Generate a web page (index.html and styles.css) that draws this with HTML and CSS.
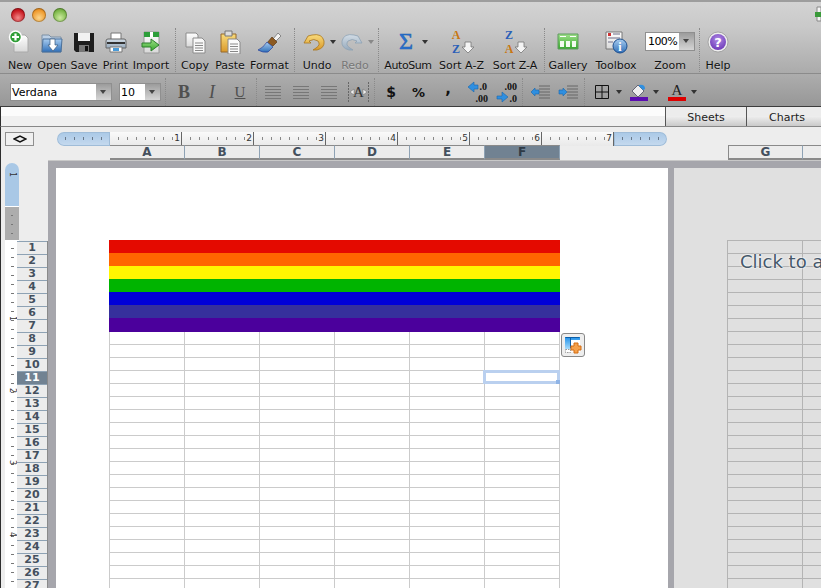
FILE: index.html
```html
<!DOCTYPE html>
<html lang="en">

<head>
    <meta charset="UTF-8">
    <title>Workbook</title>
    <link rel="stylesheet" href="styles.css">
</head>

<body>
    <svg class="defs" width="0" height="0">
        <defs>
            <linearGradient id="page" x1="0" y1="0" x2="0" y2="1"><stop offset="0" stop-color="#fff"/><stop offset="1" stop-color="#d8d8d8"/></linearGradient>
            <linearGradient id="blue" x1="0" y1="0" x2="0" y2="1"><stop offset="0" stop-color="#a9cdf0"/><stop offset="1" stop-color="#2f6fb8"/></linearGradient>
            <linearGradient id="green" x1="0" y1="0" x2="0" y2="1"><stop offset="0" stop-color="#9fe08a"/><stop offset="1" stop-color="#36a82c"/></linearGradient>
            <linearGradient id="amber" x1="0" y1="0" x2="0" y2="1"><stop offset="0" stop-color="#f9dc7c"/><stop offset="1" stop-color="#d9982a"/></linearGradient>
            <linearGradient id="steel" x1="0" y1="0" x2="0" y2="1"><stop offset="0" stop-color="#d3dde6"/><stop offset="1" stop-color="#96aabd"/></linearGradient>
            <linearGradient id="sky" x1="0" y1="0" x2="0" y2="1"><stop offset="0" stop-color="#1f8fe8"/><stop offset="1" stop-color="#a8dcfb"/></linearGradient>
            <radialGradient id="purple" cx="0.5" cy="0.35" r="0.7"><stop offset="0" stop-color="#b08be6"/><stop offset="1" stop-color="#6a35b5"/></radialGradient>
        </defs>
    </svg>

    <div class="window">
        <div class="titlebar">
            <span class="light red"></span>
            <span class="light amber"></span>
            <span class="light green"></span>
            <svg class="corner-icon" width="6" height="16" viewBox="0 0 6 16"><path d="M2 1h4v14H2z" fill="#f4f4f4" stroke="#888"/><path d="M0 6h6v5H0z" fill="#3a9a3a"/></svg>
        </div>

        <div class="toolbar">
            <div class="tool">
                <svg width="24" height="24" viewBox="0 0 24 24"><path d="M6 5h11l3 3v14H6z" fill="url(#page)" stroke="#aaa"/><circle cx="7.500" cy="7" r="6" fill="#2f9e36" stroke="#fff" stroke-width="1.500"/><path d="M7.500 3.500v7M4 7h7" stroke="#fff" stroke-width="2.200"/></svg>
                <span>New</span>
            </div>
            <div class="tool">
                <svg width="24" height="24" viewBox="0 0 24 24"><path d="M2 5h7l2 2h10v15H2z" fill="#bcd0e6" stroke="#7d90a5"/><path d="M3 9h19l-1 13H2z" fill="url(#blue)" stroke="#4d7199"/><path d="M10 9h5v6h3l-5 6-5-6h2z" fill="#fff" stroke="#39597c" stroke-width=".7"/></svg>
                <span>Open</span>
            </div>
            <div class="tool">
                <svg width="24" height="24" viewBox="0 0 24 24"><path d="M2 3h20v19H4l-2-2z" fill="#1d1d1d"/><path d="M6 3h12v8H6z" fill="#f2f2f2"/><path d="M7 15h10v7H7z" fill="#777"/><path d="M13 16h3v5h-3z" fill="#111"/></svg>
                <span>Save</span>
            </div>
            <div class="tool">
                <svg width="24" height="24" viewBox="0 0 24 24"><path d="M7 3h10v8H7z" fill="#fff" stroke="#777"/><path d="M2 11q0-2 2-2h16q2 0 2 2v7H2z" fill="url(#steel)" stroke="#666"/><path d="M3 13h18" stroke="#333" stroke-width="2"/><path d="M6 17h12v5H6z" fill="#fff" stroke="#777"/><path d="M9 18h6v3H9z" fill="#4a9bd8"/></svg>
                <span>Print</span>
            </div>
            <div class="tool">
                <svg width="24" height="24" viewBox="0 0 24 24"><path d="M5 2h15v21H5z" fill="url(#page)" stroke="#999"/><path d="M5 2h15v5H5z" fill="#2d9e3a"/><path d="M11 2h3v5h-3z" fill="#fff"/><path d="M3 13h9V9l8 6-8 6v-4H3z" fill="url(#green)" stroke="#2c7f2c"/></svg>
                <span>Import</span>
            </div>
            <div class="sep"></div>
            <div class="tool">
                <svg width="24" height="24" viewBox="0 0 24 24"><path d="M3 3h10l2 2v12H3z" fill="url(#page)" stroke="#8b8b8b"/><path d="M10 8h9l3 3v12H10z" fill="#f8f8f8" stroke="#8b8b8b"/><path d="M12 13h8M12 15.500h8M12 18h8M12 20.500h8" stroke="#888"/></svg>
                <span>Copy</span>
            </div>
            <div class="tool">
                <svg width="24" height="24" viewBox="0 0 24 24"><path d="M3 4h15v18H3z" fill="url(#amber)" stroke="#96682a"/><path d="M7 1h7v5H7z" fill="#ddd" stroke="#777"/><path d="M10 9h9l3 3v12H10z" fill="#fafafa" stroke="#888"/><path d="M12 14h8M12 16.500h8M12 19h8M12 21.500h8" stroke="#888"/></svg>
                <span>Paste</span>
            </div>
            <div class="tool">
                <svg width="24" height="24" viewBox="0 0 24 24"><path d="M15 9l5-6 3 3-5 5z" fill="#f3f3f3" stroke="#888"/><path d="M14 7l5 5-4 4-6-3z" fill="#8c5a22" stroke="#5c3a16" stroke-width=".7"/><path d="M9 12l6 5-5 5q-5 1-10-2 5-2 9-8z" fill="url(#blue)" stroke="#27409c" stroke-width=".7"/></svg>
                <span>Format</span>
            </div>
            <div class="sep"></div>
            <div class="tool with-caret">
                <svg width="22" height="24" viewBox="0 0 22 24"><path d="M5 6L1 13h7l-2-2q5-3 9 0 3 4-2 7l-3 2h4q8-2 7-9-2-8-12-6z" fill="url(#amber)" stroke="#a8761e" stroke-width=".8"/></svg>
                <b class="caret"></b>
                <span>Undo</span>
            </div>
            <div class="tool with-caret off">
                <svg width="22" height="24" viewBox="0 0 22 24"><path d="M17 6l4 7h-7l2-2q-5-3-9 0-3 4 2 7l3 2H8q-8-2-7-9 2-8 12-6z" fill="url(#steel)" stroke="#8ea2b4" stroke-width=".8"/></svg>
                <b class="caret"></b>
                <span>Redo</span>
            </div>
            <div class="sep"></div>
            <div class="tool with-caret sum">
                <svg width="26" height="28" viewBox="0 0 26 28"><text x="13" y="21" class="sigma">Σ</text></svg>
                <b class="caret"></b>
                <span>AutoSum</span>
            </div>
            <div class="tool">
                <svg width="26" height="28" viewBox="0 0 26 28"><text x="7" y="11" class="az a-mark">A</text><text x="7" y="25" class="az z-mark">Z</text><path d="M16 14h6v5h3l-6 6-6-6h3z" fill="#f4f4f4" stroke="#777" stroke-width=".8"/></svg>
                <span>Sort A-Z</span>
            </div>
            <div class="tool">
                <svg width="26" height="28" viewBox="0 0 26 28"><text x="7" y="11" class="az z-mark">Z</text><text x="7" y="25" class="az a-mark">A</text><path d="M16 14h6v5h3l-6 6-6-6h3z" fill="#f4f4f4" stroke="#777" stroke-width=".8"/></svg>
                <span>Sort Z-A</span>
            </div>
            <div class="sep"></div>
            <div class="tool">
                <svg width="22" height="20" viewBox="0 0 22 20"><path d="M1 2h20v15H1z" fill="url(#green)" stroke="#5e9a5e"/><path d="M3 9h4v6H3zM9 9h4v6H9zM15 9h4v6h-4z" fill="#f2fbef"/><path d="M3 4h6v1H3zM13 4h6v1h-6z" fill="#fff"/></svg>
                <span>Gallery</span>
            </div>
            <div class="tool">
                <svg width="24" height="24" viewBox="0 0 24 24"><path d="M2 2h16v17H2z" fill="url(#page)" stroke="#777"/><path d="M4 3h3v3H4z" fill="#c33"/><path d="M9 4h7M4 8h12M4 12h5" stroke="#99a" stroke-width="1.500"/><circle cx="16" cy="16" r="7" fill="url(#blue)" stroke="#1d4f8f"/><text x="16" y="20.500" class="info">i</text></svg>
                <span>Toolbox</span>
            </div>
            <div class="tool zoom">
                <div class="combo zoom-box"><span class="combo-value">100%</span><i class="combo-arrow"></i></div>
                <span>Zoom</span>
            </div>
            <div class="sep"></div>
            <div class="tool">
                <svg width="22" height="22" viewBox="0 0 22 22"><circle cx="11" cy="11" r="10" fill="#eee" stroke="#999" stroke-width=".8"/><circle cx="11" cy="11" r="8" fill="url(#purple)"/><text x="11" y="15.500" class="help-mark">?</text></svg>
                <span>Help</span>
            </div>
        </div>

        <div class="formatbar">
            <div class="combo font-box"><span class="combo-value">Verdana</span><i class="combo-arrow"></i></div>
            <div class="combo size-box"><span class="combo-value">10</span><i class="combo-arrow"></i></div>
            <div class="sep"></div>
            <div class="fmt serif-b">B</div>
            <div class="fmt serif-i">I</div>
            <div class="fmt serif-u">U</div>
            <div class="sep"></div>
            <div class="fmt"><i class="lines"></i></div>
            <div class="fmt"><i class="lines"></i></div>
            <div class="fmt"><i class="lines"></i></div>
            <div class="fmt">
                <svg width="21" height="20" viewBox="0 0 21 20"><path d="M.5 0v20M20.500 0v20" stroke="#666" stroke-dasharray="2 1"/><path d="M2 10l4-3v6zM19 10l-4-3v6z" fill="#eee" stroke="#666" stroke-width=".5"/><text x="10.500" y="15" class="wrap-a">A</text></svg>
            </div>
            <div class="sep"></div>
            <div class="fmt money">$</div>
            <div class="fmt percent">%</div>
            <div class="fmt comma">,</div>
            <div class="fmt">
                <svg width="22" height="22" viewBox="0 0 22 22"><path d="M1 6l6-5v3h4v4H7v3z" fill="#2f8fe0" stroke="#1766ad" stroke-width=".6"/><text x="20" y="9" class="dec">.0</text><text x="21" y="21" class="dec">.00</text></svg>
            </div>
            <div class="fmt">
                <svg width="22" height="22" viewBox="0 0 22 22"><text x="21" y="9" class="dec">.00</text><path d="M1 15h5v-4l6 5-6 5v-3H1z" fill="#2f8fe0" stroke="#1766ad" stroke-width=".6"/><text x="21" y="21" class="dec">.0</text></svg>
            </div>
            <div class="sep"></div>
            <div class="fmt">
                <svg width="20" height="14" viewBox="0 0 20 14"><path d="M9 1h11M9 4h11M9 7h11M9 10h11M9 13h11" stroke="#666"/><path d="M1 7l4-4v2h4v4H5v2z" fill="#2f8fe0" stroke="#1766ad" stroke-width=".6"/></svg>
            </div>
            <div class="fmt">
                <svg width="20" height="14" viewBox="0 0 20 14"><path d="M9 1h11M9 4h11M9 7h11M9 10h11M9 13h11" stroke="#666"/><path d="M1 5h4V3l4 4-4 4V9H1z" fill="#2f8fe0" stroke="#1766ad" stroke-width=".6"/></svg>
            </div>
            <div class="sep"></div>
            <div class="fmt picker borders">
                <svg width="14" height="14" viewBox="0 0 14 14"><path d="M.5.500h13v13H.5zM7 .5v13M.5 7h13" fill="none" stroke="#111"/></svg>
                <b class="caret"></b>
            </div>
            <div class="fmt picker">
                <span class="swatch-icon">
                    <svg width="18" height="13" viewBox="0 0 18 13"><path d="M2 7l6-6 6 6-6 6z" fill="#eee" stroke="#667"/><path d="M9 1q6-1 6 4l-2 1-4-4z" fill="#2f8fe0"/></svg>
                    <i class="swatch violet"></i>
                </span>
                <b class="caret"></b>
            </div>
            <div class="fmt picker">
                <span class="swatch-icon">
                    <span class="color-a">A</span>
                    <i class="swatch scarlet"></i>
                </span>
                <b class="caret"></b>
            </div>
        </div>

        <div class="tabstrip">
            <div class="tab">Sheets</div>
            <div class="tab">Charts</div>
        </div>

        <div class="rulerbar">
            <div class="ruler-row">
                <div class="view-toggle"><svg width="14" height="8" viewBox="0 0 14 8"><path d="M1 4l6-3 6 3-6 3z" fill="none" stroke="#111" stroke-width="1.500"/></svg></div>
                <div class="h-ruler">
                    <div class="h-margin"></div>
                    <div class="h-body">
                        <span>1</span><span>2</span><span>3</span><span>4</span><span>5</span><span>6</span><span>7</span>
                    </div>
                    <div class="h-margin end"></div>
                </div>
            </div>
            <div class="col-heads">
                <div class="col">A</div>
                <div class="col">B</div>
                <div class="col">C</div>
                <div class="col">D</div>
                <div class="col">E</div>
                <div class="col active">F</div>
                <div class="col far">G</div>
                <div class="col"></div>
            </div>
        </div>

        <div class="workspace">
            <div class="gutter">
                <div class="v-ruler">
                    <div class="v-margin"><span>1</span></div>
                    <div class="v-gray"></div>
                    <div class="v-body">
                        <em class="n1">1</em><em class="n2">2</em><em class="n3">3</em><em class="n4">4</em>
                    </div>
                </div>
                <div class="row-heads">
                    <div>1</div><div>2</div><div>3</div><div>4</div><div>5</div><div>6</div><div>7</div><div>8</div><div>9</div>
                    <div>10</div><div class="active">11</div><div>12</div><div>13</div><div>14</div><div>15</div><div>16</div><div>17</div><div>18</div>
                    <div>19</div><div>20</div><div>21</div><div>22</div><div>23</div><div>24</div><div>25</div><div>26</div><div>27</div>
                </div>
            </div>

            <div class="pages">
                <div class="page">
                    <div class="sheet">
                        <div class="band c-red"></div>
                        <div class="band c-orange"></div>
                        <div class="band c-yellow"></div>
                        <div class="band c-green"></div>
                        <div class="band c-blue"></div>
                        <div class="band c-indigo"></div>
                        <div class="band c-purple"></div>
                        <div class="cells"></div>
                        <div class="selection"><i></i></div>
                    </div>
                    <div class="add-button">
                        <svg width="22" height="22" viewBox="0 0 22 22"><path d="M3 3h15v15H3z" fill="#fff"/><path d="M3 3h15v3H3zM3 6h5v9H3z" fill="url(#sky)"/><path d="M3.500 3.500h14M8.500 3.500v11" stroke="#0b5ea8" fill="none"/><path d="M3.500 15.500h5v3h-5z" fill="none" stroke="#999" stroke-dasharray="1.500 1"/><path d="M12 9h4v3h3v4h-3v3h-4v-3H9v-4h3z" fill="#f5a04a" stroke="#d26c12"/></svg>
                    </div>
                </div>
                <div class="page-next">
                    <div class="ghost-grid"></div>
                    <div class="placeholder">Click to add</div>
                </div>
            </div>
        </div>
    </div>
</body>

</html>
```

FILE: styles.css
```css
body {
    margin: 0;
    font-family: "DejaVu Sans", sans-serif;
    background-color: #ededed;
}

.defs {
    position: absolute;
}

.window {
    width: 821px;
    height: 588px;
    overflow: hidden;
    display: flex;
    flex-direction: column;
}

.titlebar {
    height: 27px;
    box-sizing: border-box;
    padding: 6px 0 0 11px;
    display: flex;
    gap: 7px;
    background: linear-gradient(#d3d3d3, #c9c9c9);
    border-top: 2px solid #9d9d9d;
    position: relative;
}

.light {
    width: 14px;
    height: 14px;
    border-radius: 50%;
    box-shadow: inset 0 0 0 1px rgba(0, 0, 0, 0.25);
}

.light.red {
    background: radial-gradient(circle at 50% 70%, #f28a8a, #c91a22 60%, #8f1016);
}

.light.amber {
    background: radial-gradient(circle at 50% 70%, #fbd68d, #ef9a2e 60%, #b56a12);
}

.light.green {
    background: radial-gradient(circle at 50% 70%, #cdeaa0, #7db84a 60%, #52862a);
}

.corner-icon {
    position: absolute;
    right: 0;
    top: 4px;
}

.toolbar {
    height: 47px;
    box-sizing: border-box;
    padding-left: 4px;
    display: grid;
    grid-template-columns: 32px 32px 32px 31px 40px 8px 32px 38px 41px 8px 38px 38px 8px 52px 55px 52px 6px 42px 54px 54px 4px 34px;
    background: linear-gradient(#c9c9c9, #ababab);
    border-bottom: 1px solid #8b8b8b;
    font-size: 11px;
    color: #111;
}

.tool {
    display: grid;
    grid-template-rows: 29px 15px;
    justify-items: center;
    align-items: center;
    white-space: nowrap;
}

.tool > span {
    margin-top: 3px;
    text-shadow: 0 1px 0 rgba(255, 255, 255, 0.3);
}

.with-caret {
    grid-template-columns: 1fr auto;
    column-gap: 5px;
}

.with-caret > span {
    grid-column: 1 / 3;
}

.with-caret svg {
    justify-self: end;
}

.sum {
    column-gap: 3px;
}

.sum .caret {
    margin-right: 6px;
}

.sum > span {
    letter-spacing: -0.4px;
}

.caret {
    width: 0;
    height: 0;
    border: 3px solid transparent;
    border-top: 4px solid #333;
    border-bottom: 0;
}

.off {
    color: #777;
}

.off .caret {
    border-top-color: #888;
}

.sep {
    justify-self: center;
    width: 0;
    height: 44px;
    border-left: 1px dotted #8a8a8a;
    margin-top: 1px;
}

.sigma {
    font: 24px "Liberation Serif", serif;
    text-anchor: middle;
    fill: #2a72d0;
    stroke: #1c5cb0;
    stroke-width: 0.5px;
}

.az {
    font: bold 12px "Liberation Serif", serif;
    text-anchor: middle;
}

.a-mark {
    fill: #c87612;
}

.z-mark {
    fill: #2b5fb8;
}

.info {
    font: bold 12px "Liberation Serif", serif;
    text-anchor: middle;
    fill: #fff;
}

.help-mark {
    font: bold 13px "DejaVu Sans", sans-serif;
    text-anchor: middle;
    fill: #fff;
}

.combo {
    display: flex;
    height: 18px;
    box-sizing: border-box;
    background-color: #fff;
    border: 1px solid #8f8f8f;
    font-size: 11px;
    color: #000;
}

.combo-value {
    flex: 1;
    padding-left: 1px;
    line-height: 17px;
}

.combo-arrow {
    width: 15px;
    position: relative;
    background: linear-gradient(#9c9c9c, #d5d5d5);
}

.combo-arrow::after {
    content: "";
    position: absolute;
    left: 4px;
    top: 6px;
    border: 3px solid transparent;
    border-top: 4px solid #444;
    border-bottom: 0;
}

.zoom-box {
    width: 50px;
    height: 19px;
}

.zoom-box .combo-value {
    padding-left: 2px;
    letter-spacing: -0.6px;
    line-height: 18px;
}

.formatbar {
    height: 33px;
    box-sizing: border-box;
    padding: 3px 0 0 10px;
    display: grid;
    grid-template-columns: 102px 49px 9px 28px 28px 28px 4px 29px 28px 28px 30px 2px 32px 26px 30px 29px 29px 2px 34px 22px 10px 38px 38px 38px;
    align-items: center;
    background: linear-gradient(#adadad, #979797);
    border-bottom: 1px solid #3c3c3c;
}

.font-box {
    width: 102px;
}

.size-box {
    width: 42px;
    margin-left: 7px;
}

.formatbar .sep {
    height: 28px;
    margin-top: 0;
}

.fmt {
    display: flex;
    align-items: center;
    justify-content: center;
    height: 24px;
    color: #333;
}

.serif-b,
.serif-i,
.serif-u {
    font-family: "Liberation Serif", serif;
    font-size: 18px;
    color: #4f4f4f;
}

.serif-b {
    font-weight: bold;
}

.serif-i {
    font-style: italic;
}

.serif-u {
    text-decoration: underline;
    font-size: 15px;
}

.lines {
    width: 16px;
    height: 13px;
    background: repeating-linear-gradient(#777 0 1px, transparent 1px 3px);
}

.wrap-a {
    font: 15px "Liberation Serif", serif;
    text-anchor: middle;
    fill: #333;
}

.money {
    font: bold 14px "DejaVu Sans", sans-serif;
    color: #111;
}

.percent {
    font: bold 13px "DejaVu Sans", sans-serif;
    color: #111;
    padding-right: 3px;
}

.comma {
    font: bold 15px "DejaVu Sans", sans-serif;
    color: #111;
    padding-bottom: 6px;
}

.dec {
    font: bold 10px "Liberation Serif", serif;
    text-anchor: end;
    fill: #111;
}

.picker {
    justify-content: flex-start;
    gap: 5px;
    padding-left: 3px;
}

.picker.borders {
    gap: 7px;
    padding-left: 6px;
}

.swatch-icon {
    width: 18px;
    display: flex;
    flex-direction: column;
    align-items: center;
}

.swatch {
    width: 18px;
    height: 4px;
}

.swatch.violet {
    background-color: #5b0eb0;
}

.swatch.scarlet {
    background-color: #dd0000;
}

.color-a {
    font: 15px/14px "Liberation Serif", serif;
    color: #222;
}

.tabstrip {
    height: 20px;
    flex: none;
    box-sizing: border-box;
    padding-left: 664px;
    display: flex;
    background: linear-gradient(#fcfcfc 50%, #f0f0f0 50%);
    border-left: 1px solid #2d2d2d;
    border-bottom: 1px solid #888;
}

.tab {
    width: 81px;
    flex: none;
    box-sizing: border-box;
    border-left: 1px solid #555;
    background: linear-gradient(#ececec 50%, #ededed 50%, #cacaca);
    text-align: center;
    font-size: 11px;
    line-height: 21px;
    color: #222;
}

.rulerbar {
    height: 33px;
    flex: none;
    box-sizing: border-box;
    border-left: 1px solid #2d2d2d;
    background-color: #ededed;
}

.ruler-row {
    padding: 5px 0 0 4px;
    display: flex;
    height: 13px;
}

.view-toggle {
    width: 29px;
    height: 14px;
    box-sizing: border-box;
    border: 1px solid #8f8f8f;
    display: flex;
    align-items: center;
    justify-content: center;
    background-color: #f0f0f0;
}

.h-ruler {
    margin-left: 23px;
    display: flex;
    width: 610px;
    height: 14px;
}

.h-margin {
    width: 53px;
    border-radius: 7px 0 0 7px;
    background:
        repeating-linear-gradient(90deg, transparent 0 8px, #68788a 8px 9px) 0 5px / 100% 3px no-repeat,
        linear-gradient(#a9c8e6, #c6daef);
    box-shadow: inset 0 0 0 1px #9fbcd8;
}

.h-margin.end {
    border-radius: 0 7px 7px 0;
}

.h-body {
    flex: 1;
    display: flex;
    background:
        repeating-linear-gradient(90deg, transparent 0 8px, #888 8px 9px) 0 5px / 100% 3px no-repeat,
        linear-gradient(#fafafa, #e9e9e9);
    font-size: 9px;
    color: #333;
}

.h-body span {
    width: 72px;
    box-sizing: border-box;
    text-align: right;
    padding-right: 1px;
    line-height: 13px;
    border-right: 1px solid #666;
}

.col-heads {
    display: flex;
    padding-left: 109px;
    position: relative;
}

.col {
    flex: none;
    width: 75px;
    height: 15px;
    box-sizing: border-box;
    border-right: 1px solid #8ea2b4;
    border-top: 1px solid #8a8a8a;
    border-bottom: 2px solid #8a8a8a;
    background-color: #ececec;
    text-align: center;
    font-size: 12px;
    font-weight: bold;
    line-height: 13px;
    color: #44505e;
}

.col.active {
    background-color: #718292;
    color: #2e3a46;
}

.col.far {
    margin-left: 168px;
    border-left: 1px solid #8a8a8a;
}

.workspace {
    flex: 1;
    display: flex;
    min-height: 0;
}

.gutter {
    width: 48px;
    flex: none;
    position: relative;
    background-color: #ededed;
    border-left: 1px solid #2d2d2d;
    box-sizing: border-box;
}

.v-ruler {
    width: 14px;
    margin-left: 4px;
    padding-top: 3px;
    display: flex;
    flex-direction: column;
    height: 100%;
    box-sizing: border-box;
}

.v-margin {
    height: 43px;
    flex: none;
    box-sizing: border-box;
    padding-top: 7px;
    border-radius: 7px 7px 0 0;
    background-color: #a9c8e6;
    text-align: center;
    font-size: 8px;
    color: #333;
}

.v-margin span,
.v-body em {
    display: block;
    transform: rotate(90deg);
    font-style: normal;
}

.v-gray {
    height: 34px;
    flex: none;
    border-top: 1px solid #fff;
    box-sizing: border-box;
    background:
        repeating-linear-gradient(transparent 0 8px, #777 8px 9px) 6px 0 / 2px 100% no-repeat,
        #adadad;
}

.v-body {
    flex: 1;
    position: relative;
    background:
        repeating-linear-gradient(transparent 0 8px, #777 8px 9px) 6px 0 / 3px 100% no-repeat,
        #fff;
    font-size: 8px;
    color: #333;
    text-align: center;
}

.v-body em {
    position: absolute;
    left: 0;
    width: 14px;
}

.v-body .n1 { top: 74px; }
.v-body .n2 { top: 146px; }
.v-body .n3 { top: 218px; }
.v-body .n4 { top: 290px; }

.row-heads {
    position: absolute;
    left: 16px;
    top: 81px;
    width: 30px;
    border-right: 1px solid #8a8a8a;
}

.row-heads div {
    height: 13px;
    box-sizing: border-box;
    border-top: 1px solid #8ea2b4;
    background-color: #ececec;
    text-align: center;
    font-size: 11px;
    font-weight: bold;
    line-height: 12px;
    color: #44505e;
}

.row-heads .active {
    background-color: #718292;
    color: #fff;
}

.pages {
    flex: 1;
    display: flex;
    gap: 6px;
    padding: 8px 0 0 8px;
    background-color: #a6a6ac;
    box-shadow: inset 0 1px 0 #c8c8c8;
}

.page {
    width: 612px;
    flex: none;
    position: relative;
    background-color: #fff;
}

.sheet {
    position: relative;
    margin: 72px 0 0 53px;
    width: 451px;
}

.band {
    height: 13px;
}

.c-red { background-color: #e40a00; }
.c-orange { background-color: #ff6600; }
.c-yellow { background-color: #fff600; }
.c-green { background-color: #00b400; }
.c-blue { background-color: #0000d8; }
.c-indigo { background-color: #36309c; }
.c-purple { background-color: #4b009c; height: 14px; }

.cells {
    height: 260px;
    box-sizing: border-box;
    background:
        repeating-linear-gradient(transparent 0 12px, #cbcbcb 12px 13px),
        repeating-linear-gradient(90deg, #cbcbcb 0 1px, transparent 1px 75px);
    border-right: 1px solid #cbcbcb;
}

.selection {
    position: absolute;
    left: 374px;
    top: 130px;
    width: 77px;
    height: 14px;
    box-sizing: border-box;
    border: 3px solid #bad0ef;
    background-color: #fff;
}

.selection i {
    position: absolute;
    right: -3px;
    bottom: -3px;
    width: 4px;
    height: 4px;
    background-color: #8fb4e6;
}

.add-button {
    position: absolute;
    left: 505px;
    top: 165px;
    width: 24px;
    height: 24px;
    box-sizing: border-box;
    display: flex;
    align-items: center;
    justify-content: center;
    background-color: #eee;
    border: 1px solid #888;
    border-radius: 3px;
}

.page-next {
    flex: 1;
    position: relative;
    background-color: #e0e0e0;
}

.ghost-grid {
    position: absolute;
    left: 53px;
    top: 72px;
    right: 0;
    bottom: 0;
    background:
        repeating-linear-gradient(#b4b4b4 0 1px, transparent 1px 13px),
        repeating-linear-gradient(90deg, #b4b4b4 0 1px, transparent 1px 75px);
}

.placeholder {
    position: absolute;
    left: 66px;
    top: 83px;
    font-size: 18px;
    white-space: nowrap;
    color: #46586a;
    text-shadow: 0 0 2px #fff, 0 0 2px #fff;
}
```
